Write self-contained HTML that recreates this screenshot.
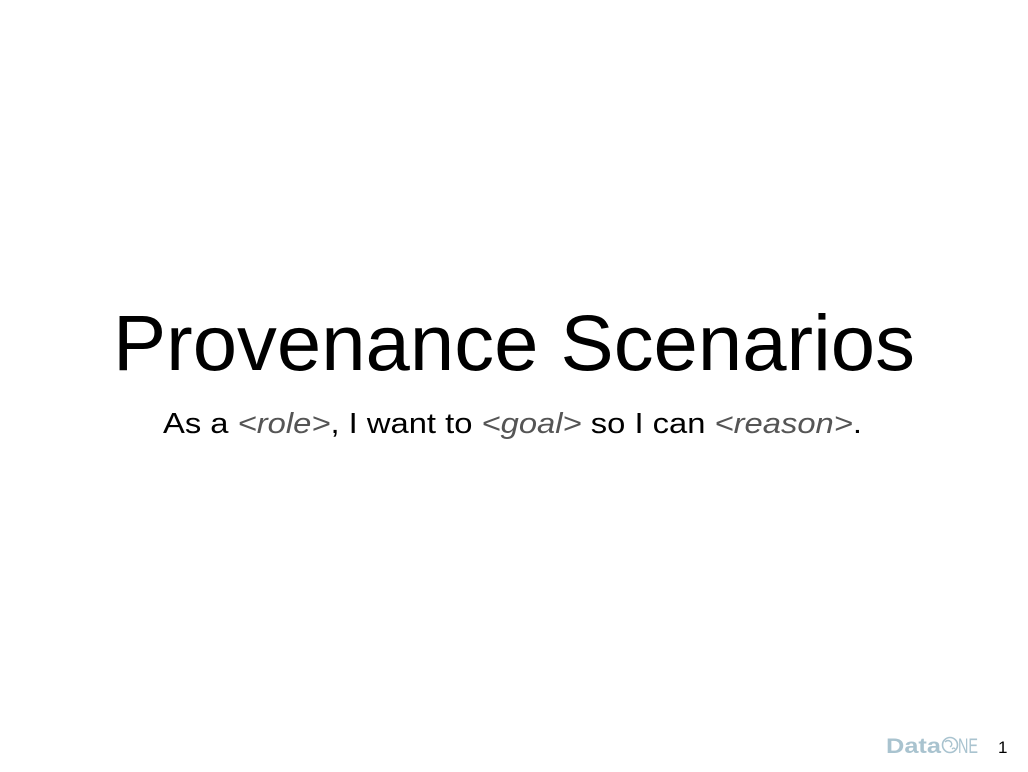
<!DOCTYPE html>
<html><head><meta charset="utf-8"><style>
html,body{margin:0;padding:0;background:#fff;width:1028px;height:772px;overflow:hidden}
</style></head><body>
<svg width="1028" height="772" xmlns="http://www.w3.org/2000/svg" style="display:block">
<text x="113" y="370" font-family="Liberation Sans, sans-serif" font-size="79" fill="#000" textLength="802" lengthAdjust="spacingAndGlyphs">Provenance Scenarios</text>
<text x="163" y="433" font-family="Liberation Sans, sans-serif" font-size="29" fill="#000" textLength="699" lengthAdjust="spacingAndGlyphs">As a <tspan fill="#555" font-style="italic">&lt;role&gt;</tspan>, I want to <tspan fill="#555" font-style="italic">&lt;goal&gt;</tspan> so I can <tspan fill="#555" font-style="italic">&lt;reason&gt;</tspan>.</text>
<text x="886" y="753" font-family="Liberation Sans, sans-serif" font-size="21" font-weight="bold" fill="#a9c3cf" textLength="55" lengthAdjust="spacingAndGlyphs">Data</text>
<circle cx="950" cy="745" r="7.5" fill="none" stroke="#a9c3cf" stroke-width="1.6"/>
<path d="M945 742 q3 -3 6 0 q2 3 -1 5 M952 749 q2 -2 3 0" fill="none" stroke="#a9c3cf" stroke-width="1.3"/>
<text x="958" y="753" font-family="Liberation Sans, sans-serif" font-size="21" fill="#a9c3cf" textLength="20" lengthAdjust="spacingAndGlyphs">NE</text>
<text x="998" y="753" font-family="Liberation Sans, sans-serif" font-size="17" fill="#000">1</text>
</svg>
</body></html>
